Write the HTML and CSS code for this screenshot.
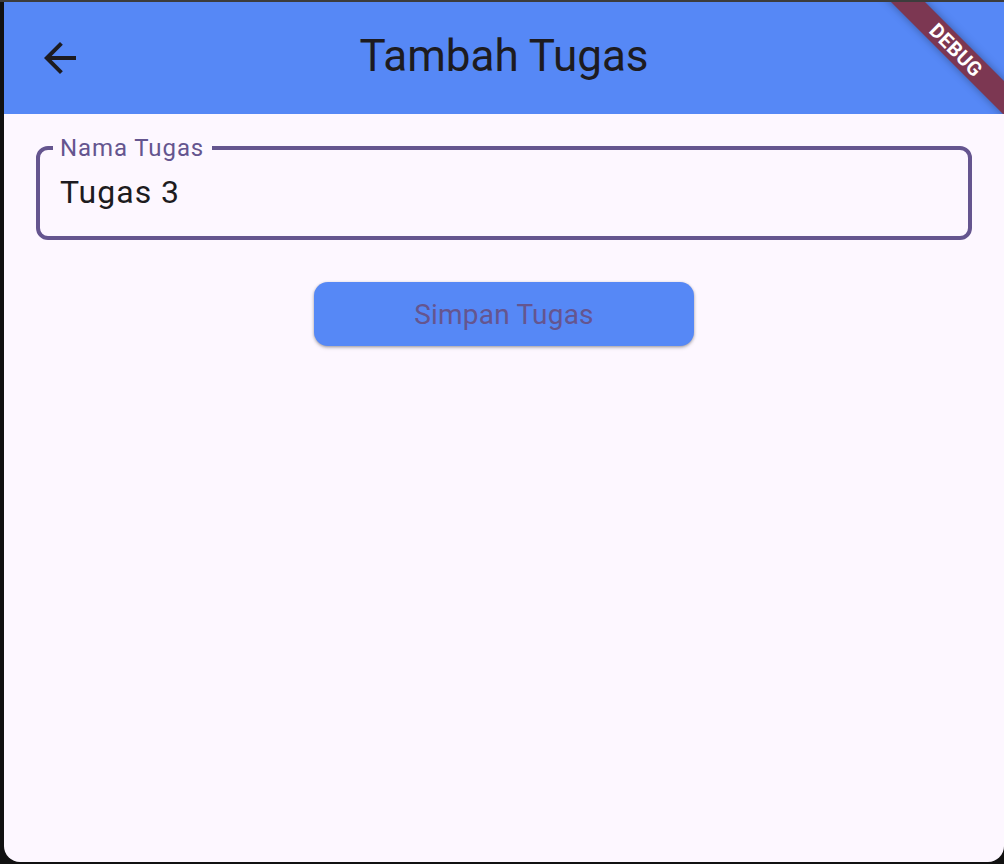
FILE: index.html
```html
<!DOCTYPE html>
<html lang="id">
<head>
<meta charset="utf-8">
<title>Tambah Tugas</title>
<link rel="stylesheet" href="styles.css">
</head>
<body>
<div class="topline"></div>
<div class="window">
  <header class="appbar">
    <div class="back">
      <svg width="48" height="48" viewBox="0 0 24 24"><path d="M20 11H7.83l5.59-5.59L12 4l-8 8 8 8 1.41-1.41L7.83 13H20v-2z" fill="#1d1b20"/></svg>
    </div>
    <h1 class="title">Tambah Tugas</h1>
    <div class="spacer"></div>
    <div class="debug"><span>DEBUG</span></div>
  </header>
  <main class="content">
    <div class="field">
      <span class="field-label">Nama Tugas</span>
      <div class="field-value">Tugas 3</div>
    </div>
    <button class="save">Simpan Tugas</button>
  </main>
</div>
</body>
</html>
```
FILE: styles.css
```css
html, body {
  margin: 0;
  padding: 0;
}
body {
  width: 1004px;
  height: 864px;
  background: #111111;
  font-family: Roboto, "Liberation Sans", sans-serif;
  overflow: hidden;
}
.topline {
  height: 2px;
  background: #3c3c3c;
}
.window {
  margin-left: 4px;
  width: 1000px;
  height: 860px;
  background: #fdf7ff;
  border-radius: 0 0 16px 16px;
  overflow: hidden;
  position: relative;
  display: flex;
  flex-direction: column;
}
.appbar {
  height: 112px;
  flex: none;
  background: #5688f6;
  display: grid;
  grid-template-columns: 112px 1fr 112px;
  align-items: center;
  position: relative;
  overflow: hidden;
}
.back {
  width: 112px;
  height: 112px;
  display: flex;
  align-items: center;
  justify-content: center;
}
.back svg { display: block; }
.title {
  margin: 0;
  padding-bottom: 4px;
  text-align: center;
  font-size: 44px;
  font-weight: 400;
  color: #1d1b20;
  line-height: normal;
}
.debug {
  position: absolute;
  left: 851.9px;
  top: 36.1px;
  width: 200px;
  height: 24px;
  background: #7c3752;
  transform: rotate(45deg);
  box-shadow: 0 0 8px rgba(0, 0, 0, 0.35);
  display: flex;
  align-items: center;
  justify-content: center;
}
.debug span {
  color: #ffffff;
  font-size: 20px;
  font-weight: 700;
  line-height: 20px;
  letter-spacing: 0.3px;
}
.content {
  padding: 32px;
  display: flex;
  flex-direction: column;
}
.field {
  position: relative;
  height: 94px;
  box-sizing: border-box;
  border: 4px solid #65558f;
  border-radius: 12px;
  padding: 26px 20px 0;
}
.field-label {
  position: absolute;
  left: 13px;
  top: -14px;
  padding: 0 8px 0 7px;
  background: #fdf7ff;
  color: #65558f;
  font-size: 24px;
  line-height: 24px;
  letter-spacing: 0.9px;
}
.field-value {
  font-size: 32px;
  line-height: 32px;
  letter-spacing: 1px;
  color: #1d1b20;
}
.save {
  align-self: center;
  margin-top: 42px;
  width: 380px;
  height: 64px;
  border: none;
  border-radius: 14px;
  background: #5688f6;
  color: #65558f;
  font-family: Roboto, "Liberation Sans", sans-serif;
  font-size: 28px;
  font-weight: 400;
  letter-spacing: 0.2px;
  box-shadow: 0 1px 3px rgba(0, 0, 0, 0.3), 0 2px 4px rgba(0, 0, 0, 0.12);
  cursor: pointer;
}
```
